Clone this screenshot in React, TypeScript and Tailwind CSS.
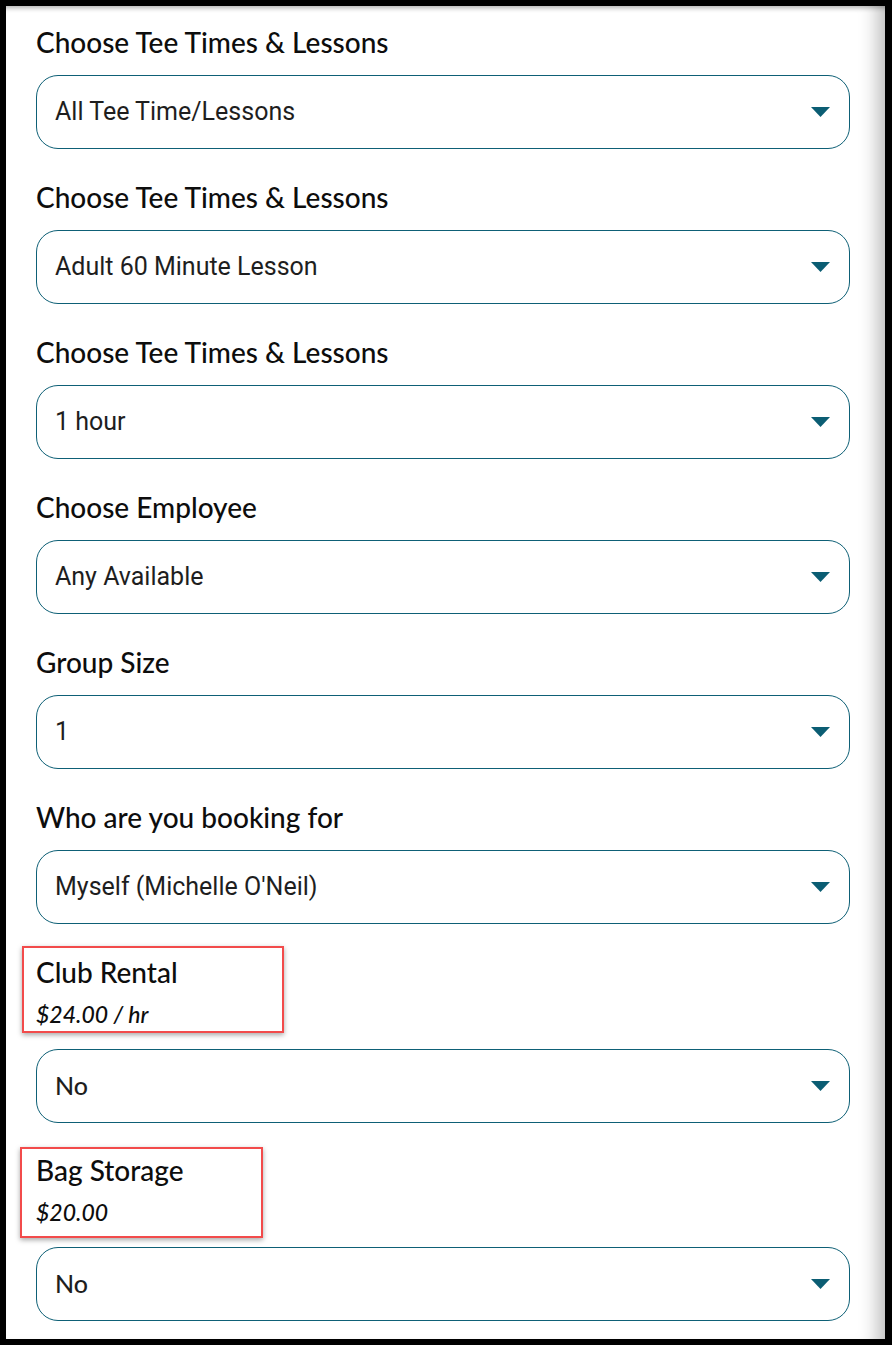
const fields = [
  { label: "Choose Tee Times & Lessons", value: "All Tee Time/Lessons" },
  { label: "Choose Tee Times & Lessons", value: "Adult 60 Minute Lesson" },
  { label: "Choose Tee Times & Lessons", value: "1 hour" },
  { label: "Choose Employee", value: "Any Available" },
  { label: "Group Size", value: "1" },
  { label: "Who are you booking for", value: "Myself (Michelle O'Neil)" },
];

const addons = [
  { label: "Club Rental", price: "$24.00 / hr", value: "No", box: "-left-[14px] -top-[8px] w-[262px] h-[87px]" },
  { label: "Bag Storage", price: "$20.00", value: "No", box: "-left-[16px] -top-[5px] w-[243px] h-[91px]" },
];

function Caret() {
  return (
    <svg width="19" height="10" viewBox="0 0 19 10" className="shrink-0">
      <path d="M0 0 L19 0 L9.5 10 Z" fill="#0b5d73" />
    </svg>
  );
}

function SelectBox({ value, roboto = true }: { value: string; roboto?: boolean }) {
  return (
    <div className="flex h-[74px] w-[814px] items-center justify-between rounded-[22px] border border-[#0e6076] pl-[18px] pr-[19px]">
      <span
        className={
          roboto
            ? "text-[25px] text-[#1e1e1e] [font-family:Roboto,sans-serif]"
            : "text-[25px] font-medium text-[#1e1e1e] [font-family:Lato,sans-serif]"
        }
      >
        {value}
      </span>
      <Caret />
    </div>
  );
}

export default function App() {
  return (
    <div className="min-h-[1345px] bg-black pb-[6px] pl-[6px] pr-[7px] pt-[6px] [font-family:Lato,sans-serif]">
      <div className="h-[1333px] bg-white pl-[30px] pt-[18px] shadow-[inset_-22px_0_18px_-14px_rgba(0,0,0,0.25),inset_0_6px_5px_-4px_rgba(0,0,0,0.3)]">
        {fields.map((f, i) => (
          <div key={i} className="mb-[30px]">
            <div className="h-[51px] text-[28px] font-medium leading-[36px] text-[#0d0d0d]">{f.label}</div>
            <SelectBox value={f.value} />
          </div>
        ))}
        {addons.map((a, i) => (
          <div key={i} className="mb-[29px]">
            <div className="relative mb-[20px]">
              <div className="text-[28px] font-medium leading-[36px] text-[#0d0d0d]">{a.label}</div>
              <div className="mt-[9px] text-[23px] font-medium italic leading-[30px] text-[#0d0d0d]">{a.price}</div>
              <div className={`absolute ${a.box} border-2 border-[#f24b4b] shadow-[0_2px_5px_rgba(0,0,0,0.35)]`} />
            </div>
            <SelectBox value={a.value} roboto={false} />
          </div>
        ))}
      </div>
    </div>
  );
}
